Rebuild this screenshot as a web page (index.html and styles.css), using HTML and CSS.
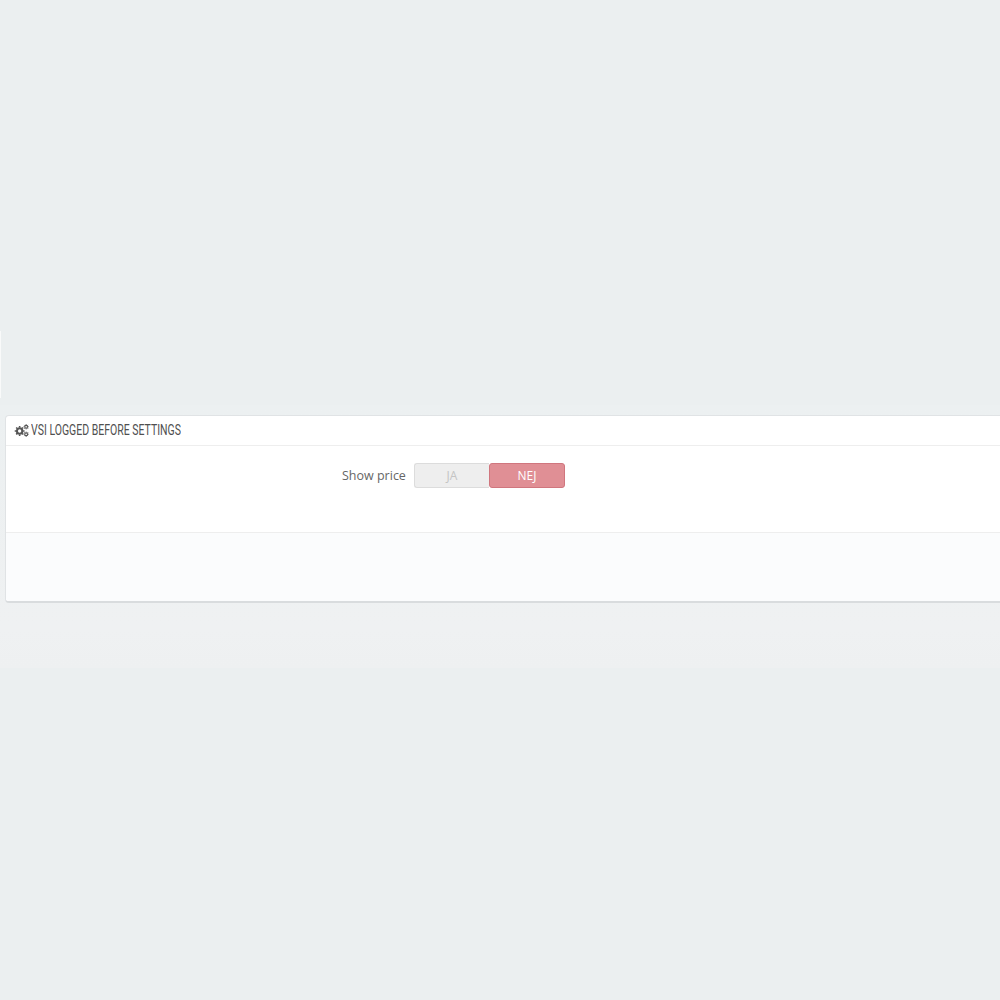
FILE: index.html
```html
<!DOCTYPE html>
<html lang="en">
<head>
  <meta charset="UTF-8" />
  <title>VSI Logged Before Settings</title>
  <link rel="stylesheet" href="styles.css">
</head>
<body>
  <div class="edge-mark"></div>
  <div class="band">
    <div class="panel">
      <div class="panel-heading">
        <svg class="cogs" viewBox="0 0 16 14" width="15" height="13" aria-hidden="true">
          <g fill="none" stroke="#555" stroke-linecap="butt">
            <circle cx="6" cy="7.5" r="2.9" stroke-width="2.2"/>
            <path stroke-width="1.7" d="M6 2.2v1.6M6 11.2v1.6M.7 7.5h1.6M9.7 7.5h1.6M2.3 3.8l1.1 1.1M8.6 10.1l1.1 1.1M2.3 11.2l1.1-1.1M8.6 4.9l1.1-1.1"/>
            <circle cx="13" cy="3" r="1.5" stroke-width="1.2"/>
            <path stroke-width="1" d="M13 .2v1M13 4.8v1M10.2 3h1M14.8 3h1M11 1l.7.7M14.3 4.3l.7.7M11 5l.7-.7M14.3 1.7l.7-.7"/>
            <circle cx="13" cy="11" r="1.5" stroke-width="1.2"/>
            <path stroke-width="1" d="M13 8.2v1M13 12.8v1M10.2 11h1M14.8 11h1M11 9l.7.7M14.3 12.3l.7.7M11 13l.7-.7M14.3 9.7l.7-.7"/>
          </g>
        </svg>
        <span class="panel-title">VSI LOGGED BEFORE SETTINGS</span>
      </div>
      <div class="panel-body">
        <label class="field-label">Show price</label>
        <div class="switch">
          <span class="switch-yes">JA</span>
          <span class="switch-no">NEJ</span>
        </div>
      </div>
      <div class="panel-footer"></div>
    </div>
  </div>
</body>
</html>
```

FILE: styles.css
```css
html, body {
  height: 100%;
}
body {
  margin: 0;
  background-color: #ebeff0;
  font-family: "Open Sans", Arial, sans-serif;
  overflow: hidden;
  padding-top: 405px;
  box-sizing: border-box;
  position: relative;
}
.edge-mark {
  position: absolute;
  left: 0;
  top: 331px;
  width: 1px;
  height: 67px;
  background: #f9fafa;
}
.band {
  height: 263px;
  box-sizing: border-box;
  padding: 10px 0 0 5px;
  background: linear-gradient(#ecf0f1, #eff1f2 85%, #eef0f1);
}
.panel {
  width: 1010px;
  height: 188px;
  box-sizing: border-box;
  background: #fff;
  border: 1px solid #e0e3e5;
  border-bottom: 2px solid #d9dcde;
  border-radius: 4px;
  display: flex;
  flex-direction: column;
}
.panel-heading {
  height: 30px;
  flex: none;
  display: flex;
  align-items: center;
  gap: 2px;
  padding: 0 0 1px 8px;
  box-sizing: border-box;
  border-bottom: 1px solid #eeeeee;
  font-family: Roboto, "Liberation Sans", sans-serif;
  font-size: 14px;
  color: #4f4f4f;
}
.panel-title {
  transform: scaleX(0.75);
  transform-origin: left center;
  white-space: nowrap;
}
.cogs {
  flex: none;
}
.panel-body {
  height: 86px;
  flex: none;
  box-sizing: border-box;
  padding: 17px 0 0 336px;
  display: flex;
  align-items: flex-start;
  gap: 8px;
}
.field-label {
  font-size: 12.5px;
  line-height: 25px;
  color: #666;
}
.switch {
  display: flex;
  width: 151px;
  height: 25px;
  font-size: 12px;
  line-height: 23px;
  text-align: center;
}
.switch-yes, .switch-no {
  flex: 1;
  box-sizing: border-box;
}
.switch-yes {
  background: #eeeeee;
  border: 1px solid #dcdcdc;
  border-right: none;
  border-radius: 3px 0 0 3px;
  color: #c4c4c4;
}
.switch-no {
  background: #e08f95;
  border: 1px solid #d0767e;
  border-radius: 3px;
  color: #fff;
}
.panel-footer {
  flex: 1;
  background: #fbfcfd;
  border-top: 1px solid #eeeeee;
  border-radius: 0 0 4px 4px;
}
```
